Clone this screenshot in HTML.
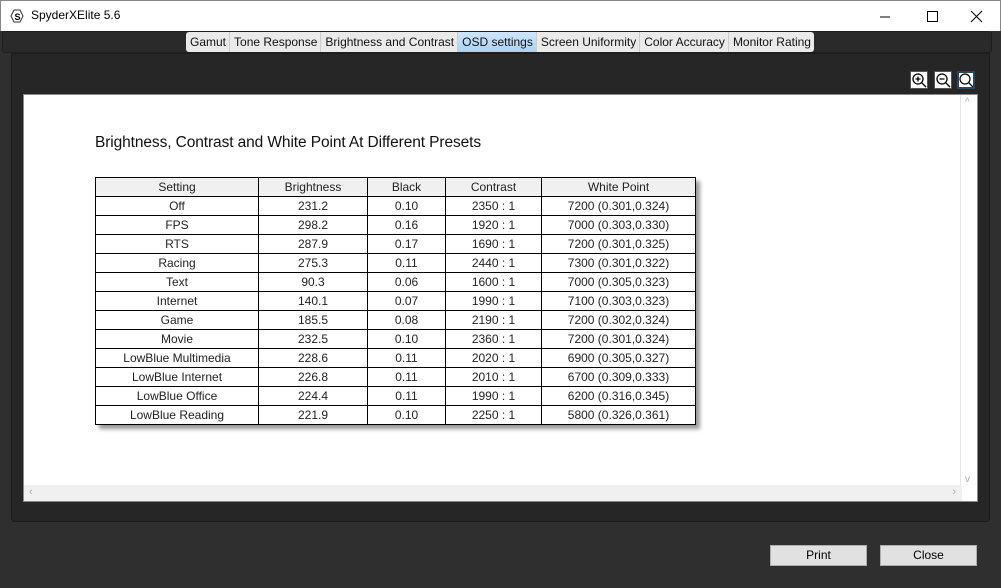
<!DOCTYPE html>
<html><head><style>
*{margin:0;padding:0;box-sizing:border-box}
body{width:1001px;height:588px;background:#2f2f2f;position:relative;overflow:hidden;font-family:"Segoe UI","Liberation Sans",sans-serif}
.tb{position:absolute;left:0;top:0;width:1001px;height:31px;background:#fff;border:1px solid #888;border-bottom:none}
.tb .t{position:absolute;left:30px;top:7px;font-size:12px;color:#000}
.tabs{position:absolute;left:186px;top:32px;height:20px;display:flex;background:#eaeaea;border-radius:3px}
.tabs div{font-size:12px;padding:1px 3px 0 4px;height:20px;line-height:19px;border-right:1px solid #ccc;color:#111}
.tabs .a{background:linear-gradient(#cfe6fb,#a9d1f5)}
.panel{position:absolute;left:11px;top:53px;width:979px;height:469px;background:#262626;border-radius:0 0 4px 4px;border:1px solid #1c1c1c}
.strip{position:absolute;left:2px;top:31px;width:990px;height:22px;background:#2a2a2a;border:1px solid #1e1e1e;border-radius:3px}
.white{position:absolute;left:23px;top:94px;width:955px;height:408px;background:#fff;border:1px solid #888}
.vs{position:absolute;right:0;top:0;width:17px;height:392px;background:#fff;border-left:1px solid #e5e5e5}
.hs{position:absolute;left:0;bottom:0;width:938px;height:16px;background:#f0f0f0;color:#aaa;font-size:11px}
h1{position:absolute;left:71px;top:39px;font:15.5px "Liberation Sans",Arial,sans-serif;color:#111;letter-spacing:-0.1px}
table{position:absolute;left:71px;top:82px;border-collapse:collapse;font:12px "Liberation Sans",Arial,sans-serif;color:#222;box-shadow:4px 4px 4px #999}
td,th{border:1px solid #000;height:19px;text-align:center;font-weight:normal;padding:0}
th{background:#f0f0f0}
.btn{position:absolute;top:545px;width:97px;height:21px;background:#e1e1e1;border:1px solid #adadad;font:12px "Liberation Sans",sans-serif;text-align:center;line-height:19px;color:#000}
.ic{position:absolute;top:71px;width:18px;height:18px;background:#fff;border:1px solid #555}
</style></head><body>
<div class="tb"><svg style="position:absolute;left:9px;top:8px" width="14" height="14"><path d="M4 1h6l3 6-3 6H4L1 7z" fill="none" stroke="#333"/><text x="4.5" y="11" font-size="9" font-weight="bold" font-family="Liberation Sans">S</text></svg><span class="t">SpyderXElite 5.6</span>
<svg style="position:absolute;left:877px;top:9px" width="110" height="14"><path d="M2 7h10" stroke="#000"/><path d="M49.5 1.5h10v10h-10z" fill="none" stroke="#000"/><path d="M93 1l11 11M104 1L93 12" stroke="#000"/></svg></div>
<div class="strip"></div>
<div class="tabs"><div>Gamut</div><div>Tone Response</div><div>Brightness and Contrast</div><div class="a">OSD settings</div><div>Screen Uniformity</div><div>Color Accuracy</div><div style="border:none">Monitor Rating</div></div>
<div class="panel"></div>
<div class="ic" style="left:910px"><svg width="16" height="16"><circle cx="7" cy="7" r="5" fill="none" stroke="#000" stroke-width="1.3"/><path d="M11 11l4 4M4.5 7h5M7 4.5v5" stroke="#000" stroke-width="1.3"/></svg></div>
<div class="ic" style="left:934px"><svg width="16" height="16"><circle cx="7" cy="7" r="5" fill="none" stroke="#000" stroke-width="1.3"/><path d="M11 11l4 4M4.5 7h5" stroke="#000" stroke-width="1.3"/></svg></div>
<div class="ic" style="left:957px;border:2px solid #2c4660"><svg width="14" height="14"><circle cx="6" cy="6" r="5" fill="none" stroke="#000" stroke-width="1.2"/><path d="M10 10l4 4" stroke="#000" stroke-width="1.3"/></svg></div>
<div class="white">
<h1>Brightness, Contrast and White Point At Different Presets</h1>
<table>
<tr><th style="width:163px">Setting</th><th style="width:109px">Brightness</th><th style="width:78px">Black</th><th style="width:96px">Contrast</th><th style="width:154px">White Point</th></tr>
<tr><td>Off</td><td>231.2</td><td>0.10</td><td>2350 : 1</td><td>7200 (0.301,0.324)</td></tr>
<tr><td>FPS</td><td>298.2</td><td>0.16</td><td>1920 : 1</td><td>7000 (0.303,0.330)</td></tr>
<tr><td>RTS</td><td>287.9</td><td>0.17</td><td>1690 : 1</td><td>7200 (0.301,0.325)</td></tr>
<tr><td>Racing</td><td>275.3</td><td>0.11</td><td>2440 : 1</td><td>7300 (0.301,0.322)</td></tr>
<tr><td>Text</td><td>90.3</td><td>0.06</td><td>1600 : 1</td><td>7000 (0.305,0.323)</td></tr>
<tr><td>Internet</td><td>140.1</td><td>0.07</td><td>1990 : 1</td><td>7100 (0.303,0.323)</td></tr>
<tr><td>Game</td><td>185.5</td><td>0.08</td><td>2190 : 1</td><td>7200 (0.302,0.324)</td></tr>
<tr><td>Movie</td><td>232.5</td><td>0.10</td><td>2360 : 1</td><td>7200 (0.301,0.324)</td></tr>
<tr><td>LowBlue Multimedia</td><td>228.6</td><td>0.11</td><td>2020 : 1</td><td>6900 (0.305,0.327)</td></tr>
<tr><td>LowBlue Internet</td><td>226.8</td><td>0.11</td><td>2010 : 1</td><td>6700 (0.309,0.333)</td></tr>
<tr><td>LowBlue Office</td><td>224.4</td><td>0.11</td><td>1990 : 1</td><td>6200 (0.316,0.345)</td></tr>
<tr><td>LowBlue Reading</td><td>221.9</td><td>0.10</td><td>2250 : 1</td><td>5800 (0.326,0.361)</td></tr>
</table>
<div class="vs"><span style="position:absolute;left:4px;top:2px;color:#aaa;font-size:10px">^</span><span style="position:absolute;left:4px;bottom:2px;color:#aaa;font-size:10px">v</span></div>
<div class="hs"><span style="position:absolute;left:5px;top:1px">&lsaquo;</span><span style="position:absolute;right:6px;top:1px">&rsaquo;</span></div>
</div>
<div class="btn" style="left:770px">Print</div>
<div class="btn" style="left:880px">Close</div>
</body></html>
